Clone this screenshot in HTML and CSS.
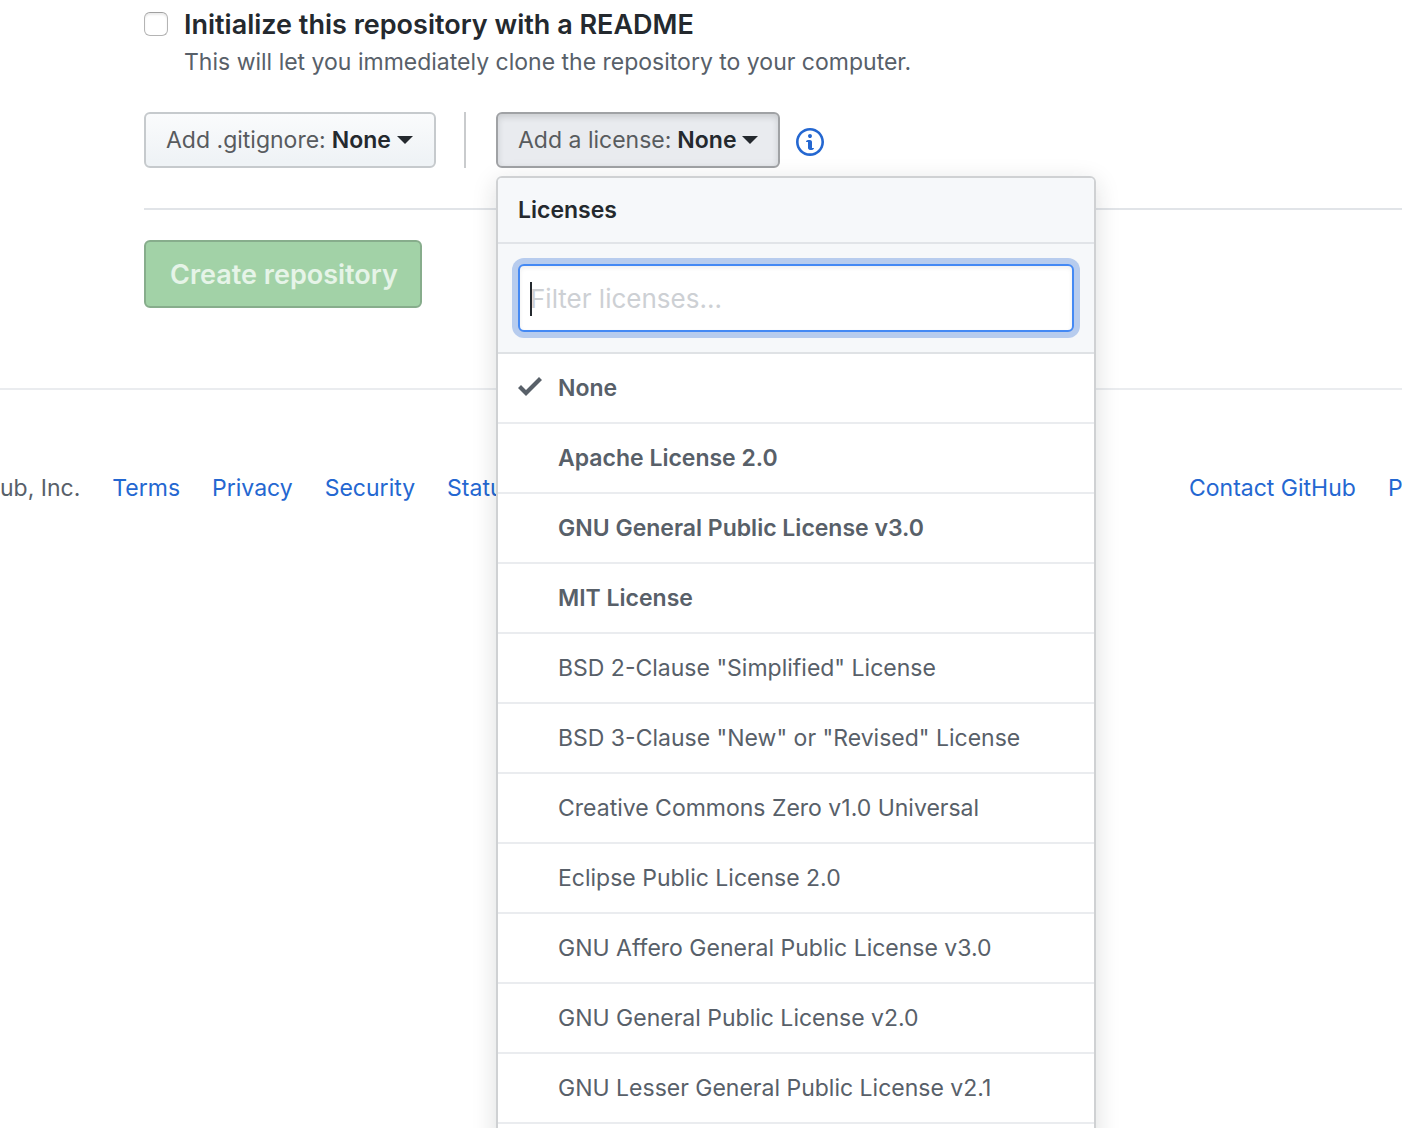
FILE: index.html
```html
<!DOCTYPE html>
<html lang="en">
<head>
<meta charset="utf-8">
<title>Create a New Repository</title>
<link rel="stylesheet" href="styles.css">
</head>
<body>
<div class="page">
  <main class="form">
    <div class="readme">
      <input class="checkbox" type="checkbox" id="readme" aria-describedby="readme-note">
      <div class="readme-text">
        <label class="readme-label" for="readme">Initialize this repository with a README</label>
        <p class="note" id="readme-note">This will let you immediately clone the repository to your computer.</p>
      </div>
    </div>

    <div class="options">
      <button class="btn btn-gitignore" type="button"><span class="btn-label">Add .gitignore:</span> <span class="btn-value">None</span><span class="caret"></span></button>
      <div class="license">
        <button class="btn btn-license selected" type="button" aria-expanded="true"><span class="btn-label">Add a license:</span> <span class="btn-value">None</span><span class="caret"></span></button>
        <div class="menu">
          <h2 class="menu-title">Licenses</h2>
          <div class="menu-filter">
            <input class="filter" type="text" placeholder="Filter licenses..." aria-label="Filter licenses">
            <span class="text-cursor"></span>
          </div>
          <ul class="menu-list">
            <li><button class="item featured" type="button"><svg class="check" viewBox="0 0 12 16" aria-hidden="true"><path d="M12 5l-8 8-4-4 1.5-1.5L4 10l6.5-6.5L12 5z"/></svg>None</button></li>
            <li><button class="item featured" type="button">Apache License 2.0</button></li>
            <li><button class="item featured" type="button">GNU General Public License v3.0</button></li>
            <li><button class="item featured" type="button">MIT License</button></li>
            <li><button class="item" type="button">BSD 2-Clause "Simplified" License</button></li>
            <li><button class="item" type="button">BSD 3-Clause "New" or "Revised" License</button></li>
            <li><button class="item" type="button">Creative Commons Zero v1.0 Universal</button></li>
            <li><button class="item" type="button">Eclipse Public License 2.0</button></li>
            <li><button class="item" type="button">GNU Affero General Public License v3.0</button></li>
            <li><button class="item" type="button">GNU General Public License v2.0</button></li>
            <li><button class="item" type="button">GNU Lesser General Public License v2.1</button></li>
          </ul>
        </div>
      </div>
      <a class="info" href="#licenses" aria-label="About licenses"><svg viewBox="0 0 14 16" aria-hidden="true"><path fill-rule="evenodd" d="M6.3 5.69a.942.942 0 0 1-.28-.7c0-.28.09-.52.28-.7.19-.18.42-.28.7-.28.28 0 .52.09.7.28.18.19.28.42.28.7 0 .28-.09.52-.28.7a1 1 0 0 1-.7.3c-.28 0-.52-.11-.7-.3zM8 7.99c-.02-.25-.11-.48-.31-.69-.2-.19-.42-.3-.69-.31H6c-.27.02-.48.13-.69.31-.2.2-.3.44-.31.69h1v3c.02.27.11.5.31.69.2.2.42.31.69.31h1c.27 0 .48-.11.69-.31.2-.19.3-.42.31-.69H8V7.98v.01zM7 2.3c-3.14 0-5.7 2.54-5.7 5.68 0 3.14 2.56 5.7 5.7 5.7s5.7-2.55 5.7-5.7c0-3.15-2.56-5.69-5.7-5.69v.01zM7 .98c3.86 0 7 3.14 7 7s-3.14 7-7 7-7-3.12-7-7 3.14-7 7-7z"/></svg></a>
    </div>

    <div class="submit">
      <button class="create" type="submit" disabled>Create repository</button>
    </div>
  </main>

  <footer class="footer">
    <div class="footer-links">
      <span>ub, Inc.</span>
      <a href="#terms">Terms</a>
      <a href="#privacy">Privacy</a>
      <a href="#security">Security</a>
      <a href="#status">Status</a>
    </div>
    <div class="footer-links footer-end">
      <a href="#contact">Contact GitHub</a>
      <a href="#pricing">Pricing</a>
    </div>
  </footer>
</div>
</body>
</html>
```
FILE: styles.css
```css
* {
  box-sizing: border-box;
}

body {
  margin: 0;
  background: #fff;
  color: #24292e;
  font: 23px/36px Inter, "Liberation Sans", sans-serif;
}

button,
input {
  font: inherit;
}

button {
  cursor: pointer;
}

.page {
  min-height: 100vh;
  overflow: hidden;
}

.form {
  padding-left: 144px;
}

.readme {
  display: flex;
  gap: 16px;
  padding-top: 6px;
}

.checkbox {
  flex: none;
  appearance: none;
  width: 24px;
  height: 24px;
  margin: 6px 0 0;
  border: 1px solid #b4b4b4;
  border-top-color: #a0a0a0;
  border-radius: 6px;
  background: #fff;
  box-shadow: inset 0 2px 2px rgba(0, 0, 0, 0.08);
}

.readme-label {
  display: block;
  font-size: 27px;
  line-height: 38px;
  font-weight: 600;
}

.note {
  margin: 0;
  color: #586069;
}

.options {
  display: flex;
  margin-top: 32px;
  padding-bottom: 40px;
  border-bottom: 2px solid #e1e4e8;
}

.btn {
  display: flex;
  align-items: center;
  gap: 6px;
  height: 56px;
  padding: 0 18px 0 20px;
  border: 2px solid #c6cacd;
  border-radius: 6px;
  background: linear-gradient(#fafbfc, #eff3f6 90%);
  color: #24292e;
  white-space: nowrap;
}

.btn-gitignore {
  width: 292px;
}

.btn-license {
  width: 284px;
}

.btn-label {
  color: #585b5e;
}

.btn-value {
  font-weight: 600;
}

.caret {
  border: 8px solid transparent;
  border-top-color: #24292e;
  border-bottom: 0;
}

.selected {
  border-color: #a0a2a5;
  background: #e9ebef;
  box-shadow: inset 0 3px 6px rgba(27, 31, 35, 0.15);
}

.license {
  position: relative;
  margin-left: 28px;
  padding-left: 30px;
  border-left: 2px solid #c9cbcd;
}

.menu {
  position: absolute;
  z-index: 1;
  top: 64px;
  left: 30px;
  width: 600px;
  padding-bottom: 20px;
  border: 2px solid #cfd1d3;
  border-radius: 6px;
  background: #fff;
  box-shadow: 0 6px 24px rgba(27, 31, 35, 0.15);
}

.menu-title {
  margin: 0;
  padding: 14px 20px;
  border-bottom: 2px solid #e1e4e8;
  border-radius: 4px 4px 0 0;
  background: #f6f8fa;
  font-size: 23px;
  line-height: 36px;
  font-weight: 600;
}

.menu-filter {
  position: relative;
  padding: 20px;
  border-bottom: 2px solid #dfe2e5;
  background: #f6f8fa;
}

.filter {
  display: block;
  width: 100%;
  height: 68px;
  padding: 0 10px;
  border: 2px solid #4489f4;
  border-radius: 6px;
  outline: 0;
  background: #fff;
  box-shadow: inset 0 2px 4px rgba(27, 31, 35, 0.07), 0 0 0 6px #b7ccee;
  font-size: 26px;
}

.filter::placeholder {
  color: #cdd0d4;
  opacity: 1;
}

.text-cursor {
  position: absolute;
  top: 38px;
  left: 32px;
  width: 2px;
  height: 34px;
  background: #24292e;
}

.menu-list {
  margin: 0;
  padding: 0;
  list-style: none;
}

.item {
  display: flex;
  align-items: center;
  gap: 16px;
  width: 100%;
  height: 70px;
  padding: 0 20px 0 60px;
  border: 0;
  border-bottom: 2px solid #eaecef;
  background: none;
  color: #586069;
  text-align: left;
}

.featured {
  font-weight: 600;
}

.check {
  width: 24px;
  height: 32px;
  margin: 0 0 4px -40px;
  fill: currentColor;
}

.info {
  height: 32px;
  margin: 14px 0 0 16px;
}

.info svg {
  display: block;
  width: 28px;
  height: 32px;
  fill: #2467d1;
}

.submit {
  padding: 30px 0 80px;
}

.create {
  height: 68px;
  padding: 2px 22px 0 24px;
  border: 2px solid #87ad8c;
  border-radius: 6px;
  background: #a2d2a7;
  color: #e6f4e8;
  font-size: 27px;
  font-weight: 600;
}

.footer {
  display: flex;
  justify-content: space-between;
  padding-top: 80px;
  border-top: 2px solid #eaecef;
  color: #586069;
  white-space: nowrap;
}

.footer-links {
  display: flex;
  gap: 32px;
}

.footer-end {
  flex: none;
  width: 213px;
}

.footer a {
  color: #2467d1;
  text-decoration: none;
}
```
